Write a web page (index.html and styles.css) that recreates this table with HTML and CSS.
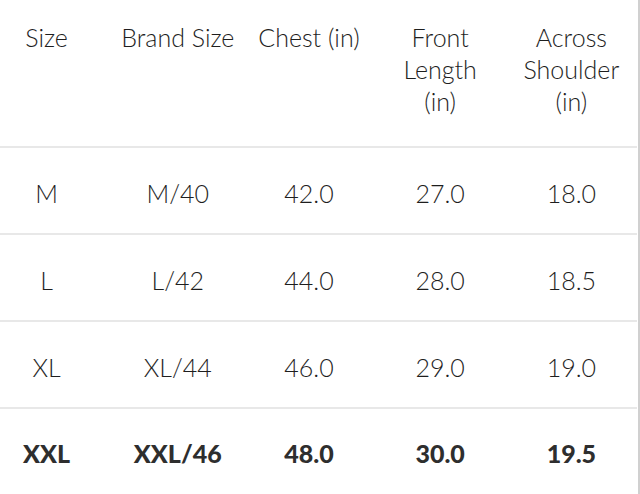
FILE: index.html
```html
<!DOCTYPE html>
<html>
<head>
<meta charset="utf-8">
<link rel="stylesheet" href="styles.css">
</head>
<body>
<div class="frame">
  <table class="size-table">
    <thead>
      <tr>
        <th>Size</th>
        <th>Brand Size</th>
        <th>Chest (in)</th>
        <th>Front<br>Length<br>(in)</th>
        <th>Across<br>Shoulder<br>(in)</th>
      </tr>
    </thead>
    <tbody>
      <tr><td>M</td><td>M/40</td><td>42.0</td><td>27.0</td><td>18.0</td></tr>
      <tr><td>L</td><td>L/42</td><td>44.0</td><td>28.0</td><td>18.5</td></tr>
      <tr><td>XL</td><td>XL/44</td><td>46.0</td><td>29.0</td><td>19.0</td></tr>
      <tr class="bold"><td>XXL</td><td>XXL/46</td><td>48.0</td><td>30.0</td><td>19.5</td></tr>
    </tbody>
  </table>
</div>
</body>
</html>
```

FILE: styles.css
```css
html, body {
  margin: 0;
  padding: 0;
  background: #ffffff;
  overflow: hidden;
}
body {
  width: 640px;
  height: 494px;
  font-family: "Lato", "Open Sans", sans-serif;
  color: #1e1e1e;
}
.frame {
  width: 638px;
  height: 494px;
  border-right: 2px solid #d0d0d0;
  overflow: hidden;
}
.size-table {
  margin-left: -19px;
  border-collapse: collapse;
  table-layout: fixed;
  width: 656px;
}
.size-table th,
.size-table td {
  width: 131px;
  text-align: center;
  padding: 0;
  font-size: 25px;
  font-weight: 300;
}
.size-table th {
  line-height: 32px;
  height: 147px;
  vertical-align: top;
  padding-top: 21px;
  box-sizing: border-box;
  border-bottom: 2px solid #e8e8e8;
}
.size-table td {
  height: 87px;
  box-sizing: border-box;
  padding-top: 4px;
  border-bottom: 2px solid #e8e8e8;
  line-height: 32px;
}
.size-table tr.bold td {
  font-weight: 900;
  border-bottom: none;
  color: #2e2e2e;
  padding-top: 2px;
}
```
